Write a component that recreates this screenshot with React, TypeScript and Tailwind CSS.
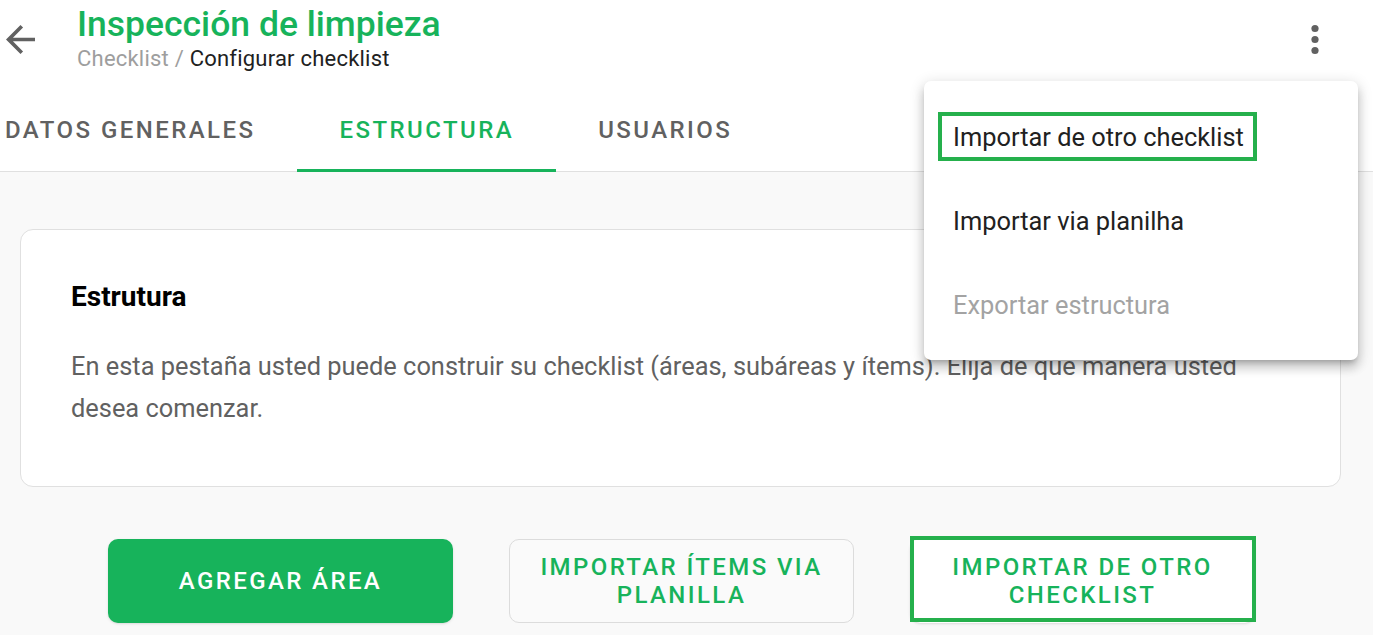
import React from "react";

function BackArrow() {
  return (
    <svg width="29" height="29" viewBox="4 4 16 16" fill="#616161">
      <path d="M20 11H7.83l5.59-5.59L12 4l-8 8 8 8 1.41-1.41L7.83 13H20v-2z" />
    </svg>
  );
}

function MoreVert() {
  return (
    <svg width="14" height="32" viewBox="0 0 14 32" fill="#616161">
      <circle cx="7" cy="4.5" r="3.6" />
      <circle cx="7" cy="15.5" r="3.6" />
      <circle cx="7" cy="26.5" r="3.6" />
    </svg>
  );
}

export default function App() {
  return (
    <div
      className="relative w-[1373px] h-[635px] overflow-hidden bg-[#f9f9f9]"
      style={{ fontFamily: "Roboto, 'Noto Sans', sans-serif" }}
    >
      {/* Header */}
      <div className="bg-white border-b border-[#e0e0e0]">
        <div className="h-[90px] flex items-start">
          <div className="ml-[6px] mt-[25px] w-[71px]">
            <BackArrow />
          </div>
          <div className="flex flex-col mt-[4px]">
            <div className="text-[35.5px] leading-[40px] font-medium text-[#17b35b]">
              Inspección de limpieza
            </div>
            <div className="mt-[2px] text-[22px] leading-[26px] tracking-[0.01em]">
              <span className="text-[#9e9e9e]">Checklist / </span>
              <span className="text-[#212121]">Configurar checklist</span>
            </div>
          </div>
          <div className="ml-auto mr-[51px] mt-[24px]">
            <MoreVert />
          </div>
        </div>
        <div className="h-[81px] flex items-stretch ml-[-37px]">
          <div className="-mb-px h-[82px] px-[42px] flex items-center pt-[1px] border-b-[3px] border-transparent text-[24px] font-medium tracking-[0.102em] text-[#616161]">
            DATOS GENERALES
          </div>
          <div className="-mb-px h-[82px] px-[42px] flex items-center pt-[1px] border-b-[3px] border-[#17b35b] text-[24px] font-medium tracking-[0.102em] text-[#17b35b]">
            ESTRUCTURA
          </div>
          <div className="-mb-px h-[82px] px-[42px] flex items-center pt-[1px] border-b-[3px] border-transparent text-[24px] font-medium tracking-[0.102em] text-[#616161]">
            USUARIOS
          </div>
        </div>
      </div>

      {/* Content */}
      <div className="pt-[57px]">
        <div className="ml-[20px] w-[1321px] h-[258px] bg-white border border-[#e0e0e0] rounded-[13px] pl-[50px] pr-[51px] pt-[50px]">
          <div className="text-[28px] leading-[34px] font-bold text-black">Estrutura</div>
          <p className="mt-[31px] text-[25.4px] leading-[42px] text-[#616161]">
            En esta pestaña usted puede construir su checklist (áreas, subáreas y ítems). Elija de que manera usted
            desea comenzar.
          </p>
        </div>

        <div className="mt-[52px] pl-[108px] flex gap-[56px]">
          <div className="w-[345px] h-[84px] rounded-[10px] bg-[#17b35b] flex items-center justify-center text-white text-[24px] font-medium tracking-[0.1em] shadow-sm">
            AGREGAR ÁREA
          </div>
          <div className="w-[345px] h-[84px] rounded-[10px] bg-[#fafafa] border border-[#dcdcdc] flex items-center justify-center text-center text-[#17b35b] text-[24px] leading-[28px] font-medium tracking-[0.1em]">
            IMPORTAR ÍTEMS VIA
            <br />
            PLANILLA
          </div>
          <div className="relative w-[345px] h-[84px] rounded-[10px] bg-white shadow-sm flex items-center justify-center text-center text-[#17b35b] text-[24px] leading-[28px] font-medium tracking-[0.1em]">
            <span>
              IMPORTAR DE OTRO
              <br />
              CHECKLIST
            </span>
            <div className="absolute left-0 top-[-3px] w-[346px] h-[86px] border-[4px] border-[#25b04c]" />
          </div>
        </div>
      </div>

      {/* Dropdown menu */}
      <div className="absolute left-[924px] top-[81px] w-[434px] h-[279px] bg-white rounded-[7px] shadow-[0_5px_5px_-3px_rgba(0,0,0,0.2),0_8px_10px_1px_rgba(0,0,0,0.14),0_3px_14px_2px_rgba(0,0,0,0.12)] pt-[14px]">
        <div className="relative h-[84px] flex items-center pl-[29px] text-[25.4px] text-[#212121]">
          Importar de otro checklist
          <div className="absolute left-[14px] top-[17px] w-[319px] h-[49px] border-[4px] border-[#25b04c]" />
        </div>
        <div className="h-[84px] flex items-center pl-[29px] text-[25.4px] text-[#212121]">
          Importar via planilha
        </div>
        <div className="h-[84px] flex items-center pl-[29px] text-[25.4px] text-[#a3a3a3]">
          Exportar estructura
        </div>
      </div>
    </div>
  );
}
